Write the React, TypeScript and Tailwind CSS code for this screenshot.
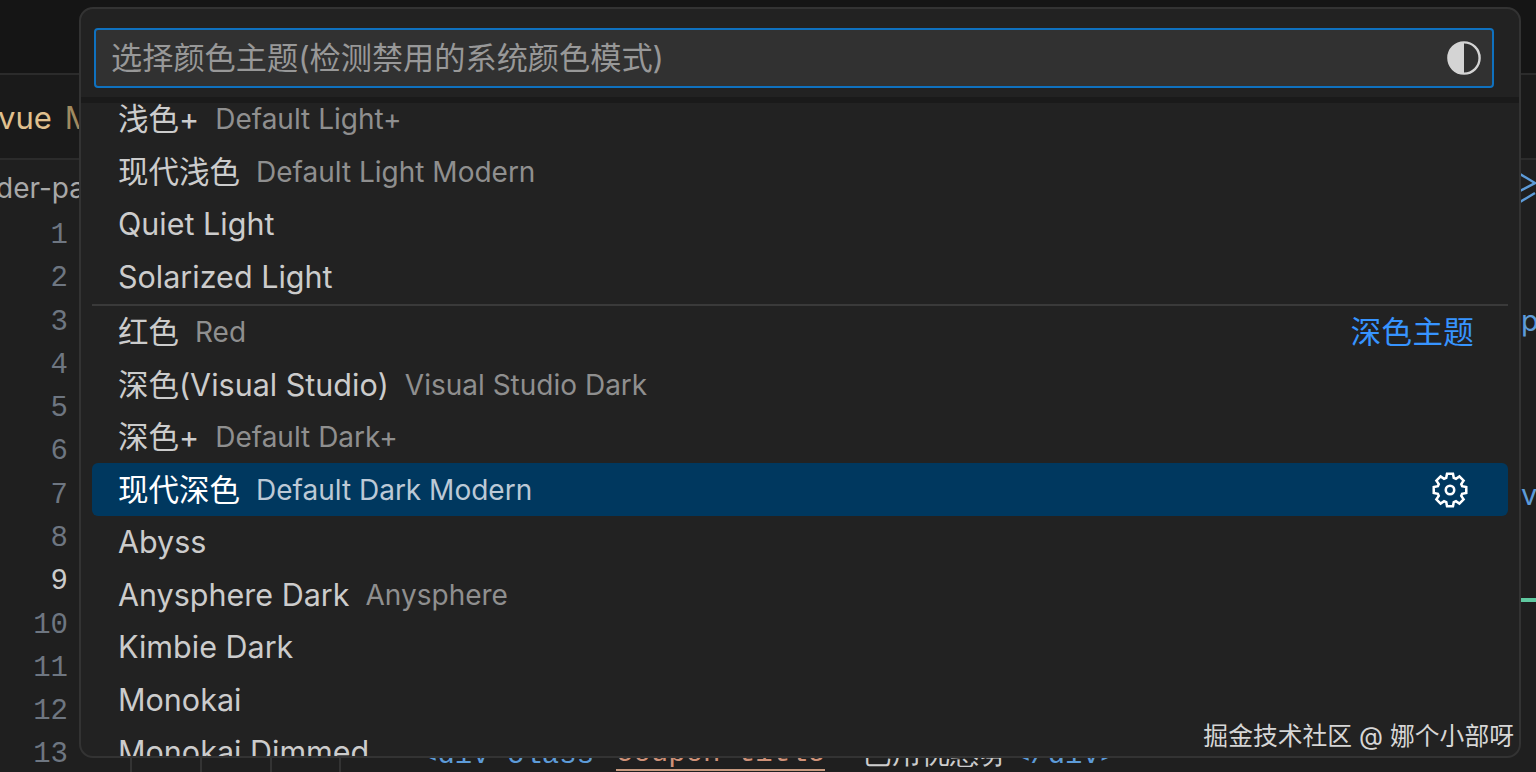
import React from 'react';

const CJK = '"Inter", "Noto Sans CJK SC", sans-serif';

interface ThemeRow {
  label: string;
  desc?: string;
  active?: boolean;
  tag?: string;
  sep?: boolean;
}

const rows: ThemeRow[] = [
  { label: '浅色+', desc: 'Default Light+' },
  { label: '现代浅色', desc: 'Default Light Modern' },
  { label: 'Quiet Light' },
  { label: 'Solarized Light' },
  { label: '红色', desc: 'Red', tag: '深色主题', sep: true },
  { label: '深色(Visual Studio)', desc: 'Visual Studio Dark' },
  { label: '深色+', desc: 'Default Dark+' },
  { label: '现代深色', desc: 'Default Dark Modern', active: true },
  { label: 'Abyss' },
  { label: 'Anysphere Dark', desc: 'Anysphere' },
  { label: 'Kimbie Dark' },
  { label: 'Monokai' },
  { label: 'Monokai Dimmed' },
];

const lineNumbers = [1, 2, 3, 4, 5, 6, 7, 8, 9, 10, 11, 12, 13];

// 8 blocky teeth, same outline as the codicon settings gear
const gearPath = Array.from({ length: 8 }, (_, i) => {
  const a = (i * Math.PI) / 4 - Math.PI / 2;
  const pt = (r: number, d: number) =>
    `${(17 + r * Math.cos(a + d)).toFixed(2)} ${(17 + r * Math.sin(a + d)).toFixed(2)}`;
  return `${i === 0 ? 'M' : 'L'}${pt(12, -0.3)} L${pt(15.6, -0.18)} L${pt(15.6, 0.18)} L${pt(12, 0.3)}`;
}).join(' ');

function GearIcon() {
  return (
    <svg width="36" height="36" viewBox="0 0 34 34" fill="none" stroke="#ffffff" strokeWidth="2.4" strokeLinejoin="miter">
      <path d={`${gearPath} Z`} />
      <circle cx="17" cy="17" r="4" />
    </svg>
  );
}

function ContrastIcon() {
  return (
    <svg width="34" height="34" viewBox="0 0 34 34">
      <circle cx="17" cy="17" r="15.6" fill="none" stroke="#d4d4d4" strokeWidth="2.4" />
      <path d="M17 1.4a15.6 15.6 0 0 0 0 31.2z" fill="#d4d4d4" />
    </svg>
  );
}

function ThemeItem({ row }: { row: ThemeRow }) {
  return (
    <div className={`mx-[11px] ${row.sep ? 'mt-[1px] border-t-2 border-[#3a3a3a]' : ''}`}>
      <div
        className={`flex h-[52.5px] items-center rounded-[6px] pl-[26px] ${row.tag ? 'pr-[34px]' : 'pr-[40px]'} ${row.active ? 'bg-[#00385f]' : ''}`}
      >
        <span className={`whitespace-nowrap text-[30.5px] ${row.active ? 'text-white' : 'text-[#cccccc]'}`}>{row.label}</span>
        {row.desc && (
          <span className={`ml-[16px] whitespace-nowrap text-[28px] ${row.active ? 'text-[#bcc9d6]' : 'text-[#8f8f8f]'}`}>{row.desc}</span>
        )}
        {row.tag && <span className="ml-auto text-[30.5px] tracking-[0.3px] text-[#3794ff]">{row.tag}</span>}
        {row.active && (
          <span className="ml-auto flex">
            <GearIcon />
          </span>
        )}
      </div>
    </div>
  );
}

export default function App() {
  return (
    <div className="relative h-[772px] w-[1536px] overflow-hidden bg-[#181818]" style={{ fontFamily: CJK }}>
      {/* editor behind the picker */}
      <div className="h-[75px] border-b-2 border-[#2b2b2b] bg-[#151515]" />
      <div className="flex h-[83px] items-center bg-[#1a1a1a] pt-[4px]">
        <span className="-ml-[2px] text-[31px] text-[#e0c08e]">vue</span>
        <span className="ml-[13px] text-[31px] text-[#a08a60]">M</span>
      </div>
      <div className="flex h-[58px] items-center justify-between border-t-2 border-[#2b2b2b] bg-[#1f1f1f]">
        <span className="-ml-[4px] text-[28px] leading-none text-[#a8a8a8]">der-pa</span>
        <svg width="16" height="32" viewBox="0 0 16 32" fill="none" stroke="#5d9bd8" strokeWidth="2.5">
          <path d="M0 2l15 9-15 8M0 30l15-9" />
        </svg>
      </div>
      <div className="-mt-[2px] flex flex-col items-end bg-[#1f1f1f] pr-[1468px]">
        {lineNumbers.map((n) => (
          <div
            key={n}
            className={`flex h-[43.3px] shrink-0 items-center font-['Liberation_Mono'] text-[29px] ${n === 9 ? 'text-[#cccccc]' : 'text-[#6e7681]'}`}
          >
            {n}
          </div>
        ))}
      </div>
      <div className="absolute left-[1521px] top-[473px] text-[29px] text-[#5d9bd8]">v</div>
      <div className="absolute left-[1521px] top-[299px] text-[29px] text-[#5d9bd8]">p</div>
      <div className="absolute left-[1521px] top-[598px] h-[4px] w-[15px] bg-[#5fc9a0]" />
      <div className="absolute bottom-0 left-0 flex h-[15px] w-[132px] border-r-2 border-[#333333]" />
      <div className="absolute bottom-0 left-[200px] h-[15px] w-[2px] bg-[#333333]" />
      <div className="absolute bottom-0 left-[270px] h-[15px] w-[2px] bg-[#333333]" />
      <div className="absolute bottom-0 left-[339px] h-[15px] w-[2px] bg-[#333333]" />
      <div className="absolute bottom-[1px] left-[420px] flex h-[30px] items-end whitespace-nowrap font-['Liberation_Mono'] text-[29px] leading-[30px]">
        <span className="text-[#5d9bd8]">&lt;div class</span>
        <span className="ml-[22px] border-b-2 border-[#c79a80] text-[#ce9178]">coupon-title</span>
        <span className="ml-[38px] text-[#cccccc]">已用优惠劵</span>
        <span className="ml-[5px] text-[#5d9bd8]">&lt;/div&gt;</span>
      </div>

      {/* color theme quick pick */}
      <div className="absolute left-[79px] top-[7px] flex h-[751px] w-[1442px] flex-col overflow-hidden rounded-[14px] border-2 border-[#333333] bg-[#222222]">
        <div className="pb-[9px] pl-[13px] pr-[25px] pt-[19px]">
          <div className="flex h-[60px] items-center justify-between rounded-[4px] border-2 border-[#0f71bf] bg-[#313131] pl-[15px] pr-[11px]">
            <span className="whitespace-nowrap text-[31.2px] text-[#989898]">选择颜色主题(检测禁用的系统颜色模式)</span>
            <ContrastIcon />
          </div>
        </div>
        <div className="h-[6px] bg-[#1a1a1a]" />
        <div className="-mt-[10px] overflow-hidden">
          {rows.map((row) => (
            <ThemeItem key={row.label} row={row} />
          ))}
        </div>
      </div>

      <div className="absolute bottom-[23px] right-[22px] text-[24.8px] leading-none text-[#d6d6d6]">掘金技术社区 @ 娜个小部呀</div>
    </div>
  );
}
